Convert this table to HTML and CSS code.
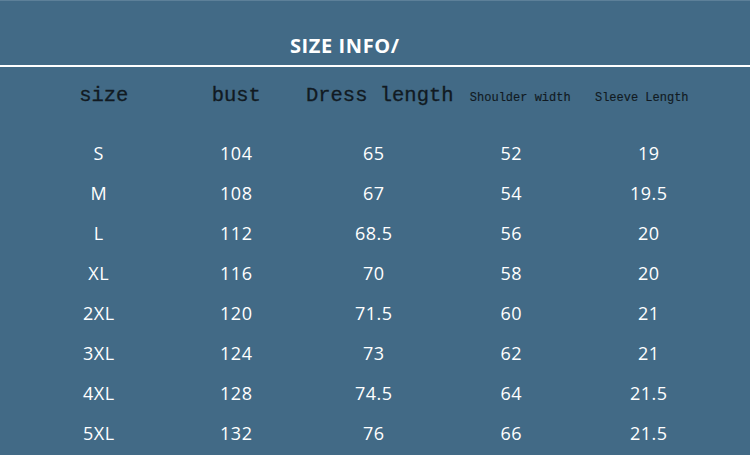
FILE: index.html
```html
<!DOCTYPE html>
<html>
<head>
<meta charset="utf-8">
<link rel="stylesheet" href="styles.css">
</head>
<body>
<div class="page">
  <div class="title-bar"><h1 class="title">SIZE INFO/</h1></div>
  <div class="rule"></div>
  <div class="table">
    <div class="row head-row">
      <div class="hd hd-size">size</div>
      <div class="hd hd-bust">bust</div>
      <div class="hd hd-dress">Dress length</div>
      <div class="hd hd-small hd-shoulder">Shoulder width</div>
      <div class="hd hd-small hd-sleeve">Sleeve Length</div>
    </div>
    <div class="row"><div>S</div><div>104</div><div>65</div><div>52</div><div>19</div></div>
    <div class="row"><div>M</div><div>108</div><div>67</div><div>54</div><div>19.5</div></div>
    <div class="row"><div>L</div><div>112</div><div>68.5</div><div>56</div><div>20</div></div>
    <div class="row"><div>XL</div><div>116</div><div>70</div><div>58</div><div>20</div></div>
    <div class="row"><div>2XL</div><div>120</div><div>71.5</div><div>60</div><div>21</div></div>
    <div class="row"><div>3XL</div><div>124</div><div>73</div><div>62</div><div>21</div></div>
    <div class="row"><div>4XL</div><div>128</div><div>74.5</div><div>64</div><div>21.5</div></div>
    <div class="row"><div>5XL</div><div>132</div><div>76</div><div>66</div><div>21.5</div></div>
  </div>
</div>
</body>
</html>
```

FILE: styles.css
```css
html, body {
  margin: 0;
  padding: 0;
  background: #426a86;
}
.page {
  width: 750px;
  height: 455px;
  overflow: hidden;
  background: #426a86;
  border-top: 1px solid #5d8099;
  box-sizing: border-box;
}
.title-bar {
  height: 64px;
  box-sizing: border-box;
  padding-top: 31px;
  padding-left: 290px;
}
.title {
  margin: 0;
  font-family: "Open Sans", sans-serif;
  font-weight: 700;
  font-size: 20px;
  line-height: 27px;
  color: #ffffff;
  letter-spacing: 0.6px;
}
.rule {
  height: 2px;
  background: #ffffff;
}
.table {
  padding-left: 30px;
}
.row {
  display: grid;
  grid-template-columns: repeat(5, 137.5px);
  height: 40px;
  font-family: "Open Sans", sans-serif;
  font-size: 18px;
  line-height: 40px;
  color: #ffffff;
  text-align: center;
  letter-spacing: 0.5px;
}
.head-row {
  height: 66px;
  box-sizing: border-box;
  padding-top: 17px;
  align-items: baseline;
  font-family: "Liberation Mono", monospace;
  color: #111a22;
  letter-spacing: 0;
  line-height: 24px;
  -webkit-text-stroke: 0.3px #111a22;
}
.hd {
  font-size: 20.5px;
  white-space: nowrap;
  justify-self: center;
}
.hd-small {
  font-size: 12px;
  -webkit-text-stroke: 0.15px #111a22;
}
.hd-size { margin-left: 10px; }
.hd-dress { margin-left: 12px; }
.hd-shoulder { margin-left: 18px; }
.hd-sleeve { margin-right: 14px; }
```
